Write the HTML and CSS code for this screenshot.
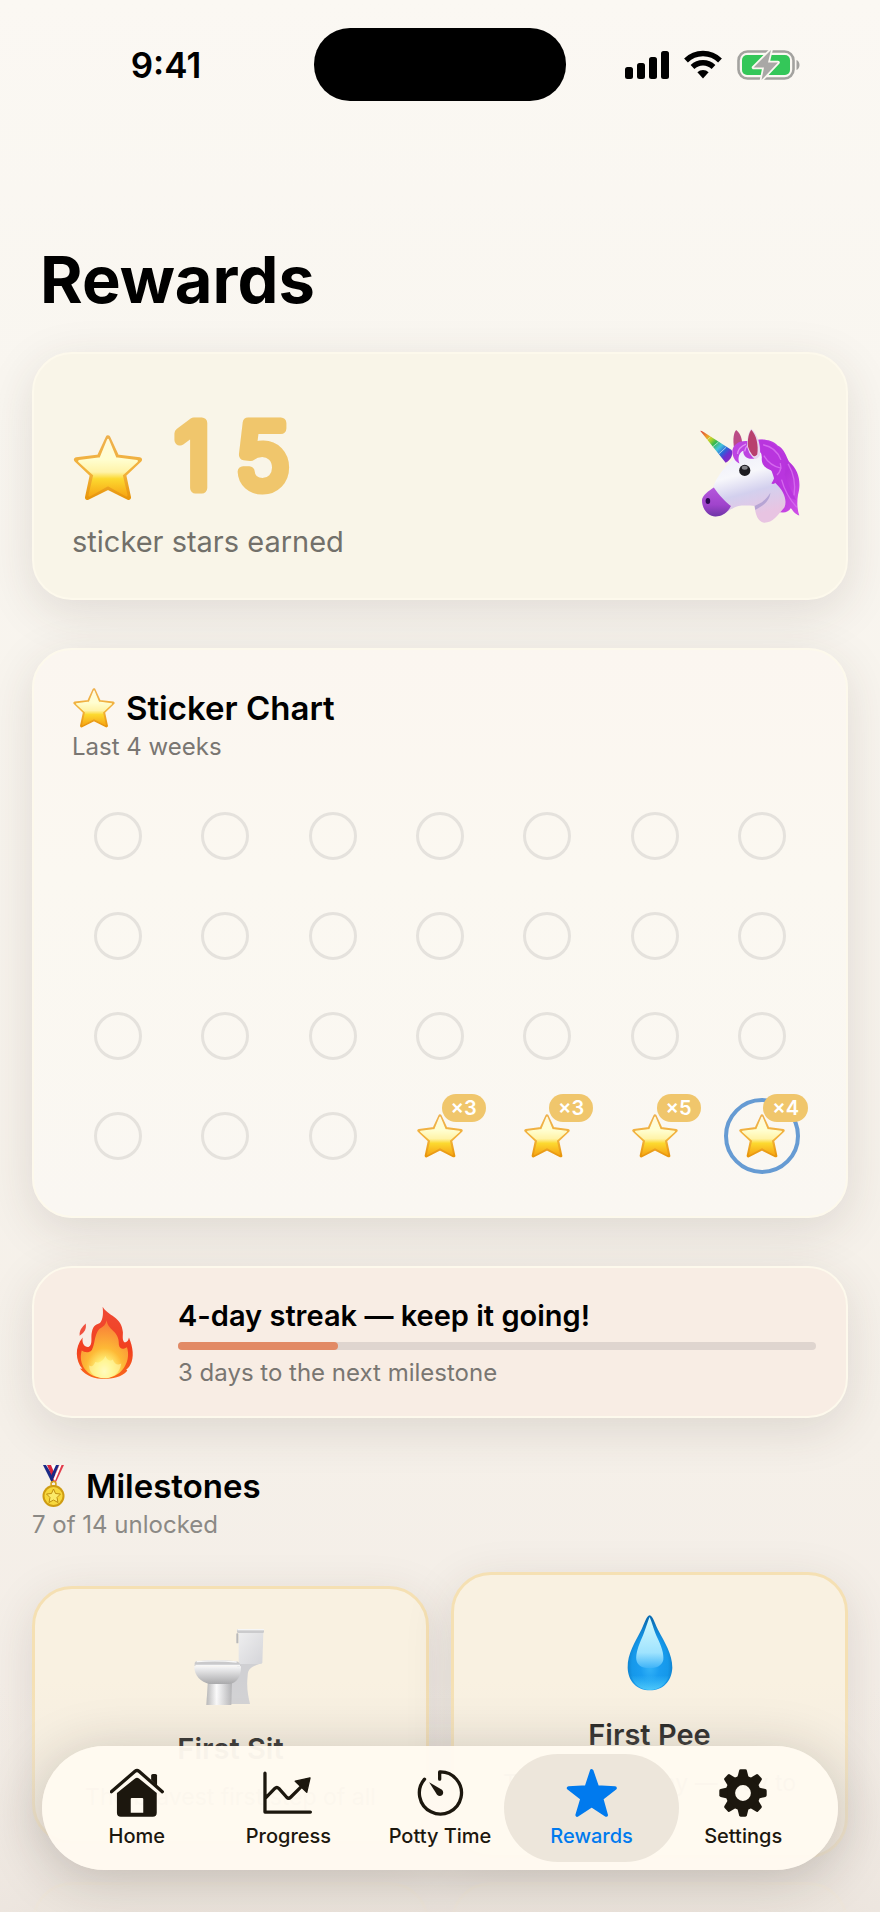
FILE: index.html
```html
<!DOCTYPE html>
<html lang="en">
<head>
<meta charset="utf-8">
<meta name="viewport" content="width=device-width, initial-scale=1">
<title>Rewards</title>
<link rel="stylesheet" href="styles.css">
</head>
<body>
<svg class="defs" aria-hidden="true">
  <defs>
    <linearGradient id="star-fill" x1="0" y1="0" x2="0" y2="1">
      <stop offset="0" stop-color="#fffadd"/>
      <stop offset=".35" stop-color="#fffed0"/>
      <stop offset=".58" stop-color="#fff3a8"/>
      <stop offset=".7" stop-color="#fcd930"/>
      <stop offset="1" stop-color="#f7a815"/>
    </linearGradient>
    <linearGradient id="star-edge" x1="0" y1="0" x2="0" y2="1">
      <stop offset="0" stop-color="#eeb04c"/>
      <stop offset=".6" stop-color="#f2b23a"/>
      <stop offset="1" stop-color="#e8960c"/>
    </linearGradient>
    <symbol id="star" viewBox="0 0 100 96">
      <path d="M50 4 63 32 96 36 73 58 80 91 50 76 20 91 27 58 4 36 37 32Z" fill="url(#star-edge)" stroke="url(#star-edge)" stroke-width="7" stroke-linejoin="round"/>
      <path d="M50 7 61 34 92 38 70 58 77 88 50 73 23 88 30 58 8 38 39 34Z" fill="url(#star-fill)" stroke="url(#star-fill)" stroke-width="3" stroke-linejoin="round"/>
    </symbol>
  </defs>
</svg>

<div class="screen">
  <header class="status">
    <time class="clock">9:41</time>
    <div class="island"></div>
    <div class="indicators">
      <svg width="44" height="30" viewBox="0 0 44 30" aria-label="Signal"><rect y="17" width="8" height="12" rx="2.5"/><rect x="12" y="13" width="8" height="16" rx="2.5"/><rect x="24" y="7" width="8" height="22" rx="2.5"/><rect x="36" y="1" width="8" height="28" rx="2.5"/></svg>
      <svg width="38" height="30" viewBox="0 0 38 30" aria-label="Wi-Fi"><g fill="none" stroke="#000" stroke-width="5.4"><path d="M2 10.500a24.200 24.200 0 0 1 34 0"/><path d="M8.500 17a15 15 0 0 1 21 0"/></g><path d="M13.400 22.300a8 8 0 0 1 11.200 0L19 28.500Z"/></svg>
      <svg width="64" height="30" viewBox="0 0 64 30" aria-label="Battery charging"><rect x="1.500" y="1.500" width="55" height="27" rx="9" fill="none" stroke="#a3a29f" stroke-width="2.600"/><rect x="5" y="5" width="48" height="20" rx="5" fill="#34c759"/><path d="M59.500 10v10c4-1.500 4-8.500 0-10Z" fill="#a3a29f"/><path d="M34 0 16.500 17.500H27L24.500 30 41 12.500H31Z" fill="#a9a8a6" stroke="#faf7f1" stroke-width="3.500" paint-order="stroke" stroke-linejoin="round"/></svg>
    </div>
  </header>

  <main class="content">
    <h1 class="page-title">Rewards</h1>

    <section class="card total">
      <div class="total-text">
        <div class="total-row">
          <svg class="total-star"><use href="#star"/></svg>
          <svg class="total-number" width="132" height="116"><text x="3" y="96">1</text><text x="64" y="96">5</text></svg>
        </div>
        <p class="total-label">sticker stars earned</p>
      </div>
      <svg class="unicorn" viewBox="108 78 324 298" aria-label="Unicorn">
        <defs>
          <linearGradient id="horn" gradientUnits="userSpaceOnUse" x1="119" y1="90" x2="210" y2="178">
            <stop offset="0" stop-color="#d83a3a"/><stop offset=".2" stop-color="#ef9a2c"/><stop offset=".32" stop-color="#b9d52b"/><stop offset=".45" stop-color="#35b84e"/><stop offset=".6" stop-color="#45c3dc"/><stop offset=".75" stop-color="#2c63d8"/><stop offset=".86" stop-color="#6d2fd0"/><stop offset="1" stop-color="#8b28c4"/>
          </linearGradient>
          <linearGradient id="coat" x1="0" y1="0" x2=".3" y2="1">
            <stop offset="0" stop-color="#e9eaf8"/><stop offset=".45" stop-color="#f7f7fb"/><stop offset=".7" stop-color="#d3d0ee"/><stop offset="1" stop-color="#e8c4e2"/>
          </linearGradient>
          <linearGradient id="mane" x1="0" y1="0" x2="1" y2="1">
            <stop offset="0" stop-color="#c44bea"/><stop offset=".6" stop-color="#b532da"/><stop offset="1" stop-color="#d050e8"/>
          </linearGradient>
          <linearGradient id="muzzle" x1="0" y1="0" x2="0" y2="1">
            <stop offset="0" stop-color="#b558dc"/><stop offset=".6" stop-color="#a044cc"/><stop offset="1" stop-color="#6f35a6"/>
          </linearGradient>
        </defs>
        <path d="M222 145C217 115 220 96 228 87 242 98 246 115 247 135Z" fill="#bb4c86"/>
        <path d="M250 130C280 113 330 108 354 134 374 142 380 168 389 184 420 210 426 250 416 284 412 310 414 330 420 347 406 343 400 332 394 324 388 338 370 342 352 334 370 328 372 310 365 292 352 272 340 260 334 248 320 220 300 190 270 170Z" fill="url(#mane)"/>
        <path d="M218 178C190 200 165 235 158 262 140 275 125 285 124 300 124 325 140 348 165 350 190 350 205 327 235 318 255 315 275 318 284 318 286 340 292 365 312 369 340 370 355 345 375 322 384 300 372 270 347 248 340 215 320 170 296 150 265 130 235 150 218 178Z" fill="url(#coat)"/>
        <path d="M284 318C305 310 322 296 332 278 330 300 315 315 286 330Z" fill="#8e7fc2" opacity=".5"/>
        <path d="M160 262C175 285 200 310 212 318 200 342 182 350 165 350 140 350 124 325 124 300 126 285 145 272 160 262Z" fill="url(#muzzle)"/>
        <ellipse cx="142" cy="303" rx="7" ry="9" fill="#2a0850"/>
        <path d="M119 90C121 88 125 91 130 94L214 148C219 160 215 176 196 187Z" fill="url(#horn)"/>
        <g stroke="#fff" stroke-width="3" opacity=".55" fill="none"><path d="m140 117 10-9M157 138l17-14M175 160l22-20"/></g>
        <path d="M270 122C238 116 216 132 216 155 218 172 226 184 238 189 230 170 240 152 250 150 248 166 262 178 284 174 276 160 274 140 270 122Z" fill="#bd43e2"/>
        <path d="M232 160Q234 140 258 130M254 152Q256 138 266 132" stroke="#e08cf4" stroke-width="4" fill="none"/>
        <path d="M262 140C260 112 265 92 274 83 292 98 304 130 300 165Q290 182 278 170 266 158 262 140Z" fill="#e7d7ef"/>
        <path d="M264 138C262 112 267 95 274 86 289 102 297 132 292 162Q284 172 277 163 268 152 264 138Z" fill="#b8406e"/>
        <path d="M298 117C334 116 356 136 369 165 379 190 380 204 375 222 384 252 400 280 410 300 386 296 360 270 355 238 350 250 342 253 335 250 350 228 346 214 330 208 312 202 304 188 306 170Z" fill="#b935de"/>
        <path d="M310 132Q350 140 364 178M312 165Q330 196 366 204M352 224Q368 210 362 188M386 190Q412 235 404 286M366 238Q378 284 412 322" stroke="#d468ee" stroke-width="4" fill="none"/>
        <circle cx="254" cy="210" r="17" fill="#1c1b20"/><ellipse cx="254" cy="202" rx="9" ry="6" fill="#85858a"/>
      </svg>
    </section>

    <section class="card chart">
      <h2 class="heading"><svg class="heading-icon"><use href="#star"/></svg>Sticker Chart</h2>
      <p class="caption">Last 4 weeks</p>
      <ol class="days">
        <li class="day"></li><li class="day"></li><li class="day"></li><li class="day"></li><li class="day"></li><li class="day"></li><li class="day"></li>
        <li class="day"></li><li class="day"></li><li class="day"></li><li class="day"></li><li class="day"></li><li class="day"></li><li class="day"></li>
        <li class="day"></li><li class="day"></li><li class="day"></li><li class="day"></li><li class="day"></li><li class="day"></li><li class="day"></li>
        <li class="day"></li><li class="day"></li><li class="day"></li>
        <li class="day earned"><svg class="sticker"><use href="#star"/></svg><span class="badge">×3</span></li>
        <li class="day earned"><svg class="sticker"><use href="#star"/></svg><span class="badge">×3</span></li>
        <li class="day earned"><svg class="sticker"><use href="#star"/></svg><span class="badge">×5</span></li>
        <li class="day earned today"><svg class="sticker"><use href="#star"/></svg><span class="badge">×4</span></li>
      </ol>
    </section>

    <section class="card streak">
      <svg class="fire" viewBox="165 165 180 225" aria-label="Fire">
        <defs>
          <linearGradient id="flame" x1="0" y1="0" x2="0" y2="1"><stop offset="0" stop-color="#ef4a35"/><stop offset=".6" stop-color="#f2401f"/><stop offset="1" stop-color="#f9691a"/></linearGradient>
          <radialGradient id="flame-core" cx=".5" cy=".88" r=".8"><stop offset="0" stop-color="#fffde0"/><stop offset=".22" stop-color="#fff27a"/><stop offset=".5" stop-color="#fdb936"/><stop offset="1" stop-color="#f98238"/></radialGradient>
        </defs>
        <path d="M248 170C262 196 306 200 308 246 308 258 306 270 312 275 322 276 324 268 326 261 338 290 342 320 330 342 326 350 322 353 318 356L321 360C305 380 275 384 254 384 225 384 200 376 181 353L188 354C168 330 164 290 189 261 186 278 194 290 206 289 220 284 212 262 216 246 220 222 232 222 240 218 250 206 250 190 248 170Z" fill="url(#flame)"/>
        <path d="M198 220C200 236 196 245 180 256 178 240 188 230 198 220Z" fill="#f0503e"/>
        <path d="M260 210C262 240 298 240 296 282 298 298 312 296 320 290 332 325 312 378 254 382 200 380 175 340 186 300 192 304 206 310 216 298 226 280 222 256 238 236 250 230 258 222 260 210Z" fill="url(#flame-core)"/>
        <path d="M256 316C262 330 272 332 278 326 284 340 292 345 303 338 300 368 275 382 252 382 225 380 208 366 208 344 216 350 222 344 226 334 236 338 250 332 256 316Z" fill="#fff9a8" opacity=".6"/>
      </svg>
      <div class="streak-body">
        <h2 class="streak-title" id="streak">4-day streak — keep it going!</h2>
        <progress class="bar" max="100" value="25" aria-labelledby="streak"></progress>
        <p class="caption">3 days to the next milestone</p>
      </div>
    </section>

    <section class="milestones">
      <h2 class="heading medal-heading"><svg class="medal" viewBox="0 0 36 44"><path d="M7 1h6l6 15-3 3Z" fill="#1b2a86"/><path d="M22 1h-5l-7 0 7 11Z" fill="#fff"/><path d="M11 1h4l5 12-2 4Z" fill="#d9263c"/><path d="M28 1h-5l-7 17h4Z" fill="#e23b4a"/><path d="M23 1h-3l-6 13 2 4Z" fill="#1b2a86"/><path d="M25.500 1h-2l-6 14 1.500 2Z" fill="#fff"/><circle cx="17.500" cy="20" r="2.500" fill="none" stroke="#d9a21a" stroke-width="1.500"/><circle cx="17.500" cy="32" r="11" fill="#cf9c12"/><circle cx="17.500" cy="32" r="9" fill="#f7d83d"/><path d="m17.500 25 2 4.500 5 .5-3.500 3.500 1 5-4.500-2.500-4.500 2.500 1-5-3.500-3.500 5-.5Z" fill="#fbea6a" stroke="#c08f10"/></svg>Milestones</h2>
      <p class="caption muted">7 of 14 unlocked</p>
      <div class="tiles">
        <article class="tile">
          <svg class="tile-icon" viewBox="575 199 240 240" aria-label="Toilet">
            <defs>
              <linearGradient id="bowl" x1="0" y1="0" x2="0" y2="1"><stop offset="0" stop-color="#f6f6f7"/><stop offset="1" stop-color="#a9a9ab"/></linearGradient>
              <linearGradient id="stem" x1="0" y1="0" x2="1" y2="0"><stop offset="0" stop-color="#b4b4b5"/><stop offset=".4" stop-color="#fbfbfc"/><stop offset="1" stop-color="#b0b0b3"/></linearGradient>
              <linearGradient id="tank" x1="0" y1="0" x2="1" y2="1"><stop offset="0" stop-color="#eeeeef"/><stop offset="1" stop-color="#d5d5d9"/></linearGradient>
            </defs>
            <path d="M718 310H780C760 318 746 322 745 345 741 380 746 405 752 430H695V350Z" fill="#d0d0d3"/>
            <path d="M718 214H792L789 306Q788 310 782 310H722Q718 310 718 306Z" fill="url(#tank)"/>
            <path d="M713 205H794V214Q794 217 790 217H717Q713 217 713 213Z" fill="#cbcbcd"/><path d="M714 205h80v4h-80Z" fill="#f6f6f6"/>
            <rect x="711" y="218" width="6" height="30" rx="2" fill="#b9b9ba"/>
            <path d="M626 355H698L696 433H621Z" fill="url(#stem)"/>
            <path d="M585 317H725C726 350 710 368 690 370H630C605 365 584 345 585 317Z" fill="url(#bowl)"/>
            <path d="M590 302Q650 296 712 302 722 305 724 316H586Q584 306 590 302Z" fill="#c9c9cb"/><path d="M592 303Q650 298 712 304M588 314H722" stroke="#f7f7f7" stroke-width="4" fill="none"/>
          </svg>
          <h3 class="tile-title">First Sit</h3>
          <p class="tile-note">The bravest first step of all</p>
        </article>
        <article class="tile">
          <svg class="tile-icon" viewBox="508 158 240 240" aria-label="Drop">
            <defs>
              <radialGradient id="drop" cx=".5" cy=".68" r=".62"><stop offset="0" stop-color="#34b4f8"/><stop offset=".35" stop-color="#1a9df0"/><stop offset=".65" stop-color="#1598ea"/><stop offset="1" stop-color="#0a6db4"/></radialGradient>
              <linearGradient id="shine" x1="0" y1="0" x2="0" y2="1"><stop offset="0" stop-color="#d8fbfd"/><stop offset=".7" stop-color="#9fe3fe"/><stop offset="1" stop-color="#3fb4f8"/></linearGradient>
              <linearGradient id="drop-base" x1="0" y1="0" x2="0" y2="1"><stop offset="0" stop-color="#45c6fb" stop-opacity="0"/><stop offset="1" stop-color="#45c6fb"/></linearGradient>
            </defs>
            <path d="M627 165C637 168 640 184 652 208 672 246 695 280 695 322 693 364 666 390 628 390 588 390 562 362 561 322 560 280 584 244 602 208 614 184 617 168 627 165Z" fill="url(#drop)"/>
            <path d="M570 345H686C676 374 654 389 628 389 600 389 580 374 570 345Z" fill="url(#drop-base)"/>
            <path d="M627 170C634 186 640 212 650 232 662 256 670 280 668 298 664 318 645 323 627 323 608 323 590 318 587 298 585 280 594 254 604 232 614 210 620 186 627 170Z" fill="url(#shine)"/>
          </svg>
          <h3 class="tile-title">First Pee</h3>
          <p class="tile-note">The first of many — way to go!</p>
        </article>
        <article class="tile locked"></article>
        <article class="tile locked"></article>
      </div>
    </section>
  </main>

  <div class="fade"></div>

  <nav class="tabs" aria-label="Main">
    <a class="tab" href="#home">
      <svg class="tab-icon" viewBox="150 56 164 152"><path d="M154 128 226 66Q232 61 238 66L309 128" fill="none" stroke="currentColor" stroke-width="10" stroke-linecap="round" stroke-linejoin="round"/><path d="M275 92V79Q275 74 280 74H288Q293 74 293 79V110Z"/><path fill-rule="evenodd" d="M171 132 226 88Q232 84 238 88L292 132V192Q292 204 280 204H183Q171 204 171 192ZM213 150V192H251V150Q251 147 248 147H216Q213 147 213 150Z"/></svg>
      <span class="tab-label">Home</span>
    </a>
    <a class="tab" href="#progress">
      <svg class="tab-icon" viewBox="604 56 164 152"><path d="M616 72V190H754M618 147 646 118Q652 112 658 118L682 145Q688 151 694 145L728 111" fill="none" stroke="currentColor" stroke-width="10" stroke-linecap="round" stroke-linejoin="round"/><path d="M708 96 753 86 743 130Z" stroke="currentColor" stroke-width="4" stroke-linejoin="round"/></svg>
      <span class="tab-label">Progress</span>
    </a>
    <a class="tab" href="#potty-time">
      <svg class="tab-icon" viewBox="1058 56 164 152"><path d="M1139 90V68A64 64 0 1 1 1093 90" fill="none" stroke="currentColor" stroke-width="10" stroke-linecap="round" stroke-linejoin="round"/><path d="M1107 99 1146 122Q1153 130 1147 138 1139 145 1131 137Z"/></svg>
      <span class="tab-label">Potty Time</span>
    </a>
    <a class="tab active" href="#rewards" aria-current="page">
      <svg class="tab-icon" viewBox="225 95 164 152"><path d="M306 104 323 153 377 156 336 188 350 238 306 209 262 238 277 188 236 156 290 153Z" stroke="currentColor" stroke-width="11" stroke-linejoin="round"/></svg>
      <span class="tab-label">Rewards</span>
    </a>
    <a class="tab" href="#settings">
      <svg class="tab-icon" viewBox="677 101 164 152"><g transform="translate(759 177)"><path fill-rule="evenodd" d="M0-53A53 53 0 1 1 0 53 53 53 0 0 1 0-53ZM0-24A24 24 0 1 0 0 24 24 24 0 0 0 0-24Z"/><g id="teeth"><path id="tooth" d="M-17-48-12-68Q-11-72-7-72H7Q11-72 12-68L17-48Z"/><use href="#tooth" transform="rotate(45)"/><use href="#tooth" transform="rotate(90)"/><use href="#tooth" transform="rotate(135)"/></g><use href="#teeth" transform="rotate(180)"/></g></svg>
      <span class="tab-label">Settings</span>
    </a>
  </nav>
</div>
</body>
</html>
```

FILE: styles.css
```css
*,
*::before,
*::after {
  box-sizing: border-box;
}

body {
  margin: 0;
  font-family: Inter, "Liberation Sans", sans-serif;
  color: #000;
}

h1, h2, h3, p, ol {
  margin: 0;
  padding: 0;
}

.defs {
  position: absolute;
  width: 0;
  height: 0;
}

.screen {
  position: relative;
  height: 100vh;
  overflow: hidden;
  background: linear-gradient(#fbf8f3, #f9f6f0 20%, #f5f0e9 75%, #f3ece6);
}

/* Status bar */
.status {
  display: grid;
  grid-template-columns: 1fr 252px 1fr;
  align-items: center;
  padding-top: 28px;
}

.clock {
  padding-left: 18px;
  text-align: center;
  font-size: 35px;
  line-height: 44px;
  font-weight: 600;
}

.island {
  height: 73px;
  border-radius: 36px;
  background: #000;
}

.indicators {
  display: flex;
  justify-content: center;
  gap: 15px;
  padding-right: 20px;
}

/* Page */
.content {
  padding: 139px 32px 0;
}

.page-title {
  padding-left: 8px;
  margin-bottom: 32px;
  font-size: 65px;
  line-height: 80px;
  font-weight: 700;
}

.card {
  margin-bottom: 48px;
  padding: 40px;
  border: 2px solid #fdf9ec;
  border-radius: 40px;
  background: #faf7f1;
  box-shadow: 0 12px 48px rgba(60, 50, 40, .13);
}

.total {
  display: flex;
  align-items: center;
  justify-content: space-between;
  padding: 38px 42px 38px 38px;
  background: #f9f5e8;
}

.total-row {
  display: flex;
  gap: 28px;
  height: 116px;
  margin-bottom: 16px;
}

.total-star {
  width: 72px;
  height: 66px;
  margin-top: 43px;
}

.total-number {
  overflow: visible;
  font-size: 90px;
  font-weight: 300;
  fill: #f0c66c;
  stroke: #f0c66c;
  stroke-width: 11px;
  stroke-linecap: round;
  stroke-linejoin: round;
}

.total-label {
  font-size: 29px;
  line-height: 36px;
  color: #72706a;
}

.unicorn {
  width: 108px;
  height: 98px;
}

.chart {
  padding: 38px;
  background: linear-gradient(#fbf6f0, #fbf8f1 40%, #faf7f2);
}

.heading {
  display: flex;
  align-items: center;
  gap: 10px;
  height: 40px;
  font-size: 33px;
  line-height: 40px;
  font-weight: 600;
}

.heading-icon {
  width: 44px;
  height: 40px;
}

.caption {
  margin-top: 4px;
  font-size: 24px;
  line-height: 30px;
  color: #797672;
}

.days {
  display: grid;
  grid-template-columns: repeat(7, 1fr);
  gap: 16px;
  margin-top: 32px;
  list-style: none;
}

.day {
  position: relative;
  display: grid;
  place-items: center;
  height: 84px;
}

.day:not(.earned)::before {
  content: "";
  width: 48px;
  height: 48px;
  border: 3px solid #e5e2dd;
  border-radius: 50%;
}

.today::before {
  content: "";
  position: absolute;
  width: 76px;
  height: 76px;
  border: 4px solid #669bd3;
  border-radius: 50%;
}

.sticker {
  width: 48px;
  height: 44px;
}

.badge {
  position: absolute;
  top: 0;
  right: 0;
  padding: 0 9px;
  border-radius: 14px;
  background: #f0c66c;
  color: #fff;
  font-size: 20px;
  line-height: 28px;
  font-weight: 600;
}

.streak {
  display: flex;
  align-items: center;
  gap: 42px;
  padding: 30px 30px 28px 40px;
  background: #f8ede4;
}

.fire {
  flex: none;
  width: 62px;
  height: 76px;
}

.streak-body {
  flex: 1;
  display: grid;
  gap: 8px;
}

.streak-body .caption {
  margin-top: 0;
}

.streak-title {
  font-size: 29px;
  line-height: 36px;
  font-weight: 600;
}

.bar {
  display: block;
  width: 100%;
  height: 8px;
  border: 0;
  appearance: none;
}

.bar::-webkit-progress-bar {
  border-radius: 4px;
  background: #dfd5cf;
}

.bar::-webkit-progress-value {
  border-radius: 4px;
  background: #e28a65;
}

/* Milestones */
.medal {
  width: 36px;
  height: 44px;
}

.medal-heading {
  padding-left: 4px;
  gap: 14px;
}

.muted {
  color: #8b8985;
}

.tiles {
  display: grid;
  grid-template-columns: repeat(2, 1fr);
  align-items: center;
  gap: 24px 22px;
  margin-top: 32px;
}

.tile {
  padding: 38px 36px 30px;
  border: 3px solid #f5e0b3;
  border-radius: 40px;
  background: #f9f1e1;
  text-align: center;
  box-shadow: 0 12px 48px rgba(60, 50, 40, .13);
}

.locked {
  min-height: 284px;
  border-color: #f3e6cc;
  background: #efe8dc;
}

.tile-icon {
  display: block;
  width: 80px;
  height: 80px;
  margin: 0 auto 24px;
}

.tile-title {
  font-size: 29px;
  line-height: 36px;
  font-weight: 600;
}

.tile-note {
  margin-top: 16px;
  font-size: 23px;
  line-height: 28px;
  color: #6b6862;
}

.fade {
  position: absolute;
  inset: auto 0 0;
  height: 232px;
  background: linear-gradient(rgba(238, 232, 224, 0), rgba(238, 232, 224, .4) 40%, rgba(236, 229, 222, .85));
}

/* Tab bar */
.tabs {
  position: absolute;
  inset: auto 42px 42px;
  display: grid;
  grid-template-columns: repeat(5, 1fr);
  padding: 8px 19px;
  border-radius: 62px;
  background: rgba(255, 250, 240, .96);
  box-shadow: 0 8px 56px rgba(40, 30, 25, .22);
}

.tab {
  display: grid;
  justify-items: center;
  gap: 6px;
  margin: 0 -12px;
  padding: 14px 0;
  border-radius: 54px;
  color: #1c170e;
  text-decoration: none;
}

.active {
  background: #ede6db;
  color: #007aee;
}

.tab-icon {
  width: 54px;
  height: 50px;
  fill: currentColor;
}

.tab-label {
  font-size: 20px;
  line-height: 24px;
  font-weight: 500;
}
```
